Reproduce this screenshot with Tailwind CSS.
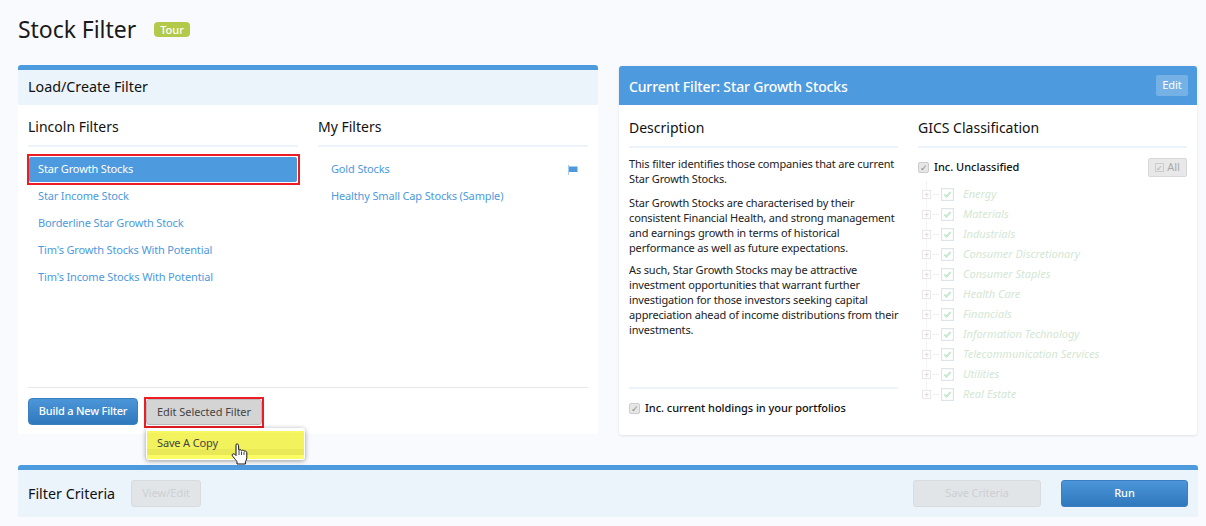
<!DOCTYPE html>
<html><head><meta charset="utf-8">
<script src="https://cdn.jsdelivr.net/npm/@tailwindcss/browser@4"></script>
</head>
<body class="bg-[#f9fafd] font-['Noto_Sans',sans-serif] text-[#111]">
<div class="w-[1206px] h-[526px] overflow-hidden px-[18px]">
  <div class="h-[65px] flex items-center pb-[6px] gap-[18px]">
    <h1 class="text-[23px] leading-none text-[#1a1a1a] tracking-[-0.05px]">Stock Filter</h1>
    <span class="bg-[#b2c94a] text-white text-[11px] font-medium leading-[15px] rounded-[4px] px-[6px] mb-[1px]">Tour</span>
  </div>
  <div class="flex gap-[21px] items-start">
    <section class="w-[580px] h-[369px] bg-white border-t-[5px] border-[#4d9ade] rounded-t-[3px] flex flex-col relative">
      <div class="h-[35px] bg-[#ebf3fb] flex items-center px-[10px] pb-[2px] text-[14.3px]">Load/Create Filter</div>
      <div class="flex-1 flex gap-[20px] px-[10px]">
        <div class="w-[270px]">
          <h2 class="h-[42px] border-b-2 border-[#edf3fa] text-[14px] pt-[11px] leading-[22px]">Lincoln Filters</h2>
          <ul class="mt-[10px] flex flex-col gap-[2px] text-[11px] tracking-[-0.15px] text-[#4d9ade]">
            <li class="relative h-[25px] flex items-center px-[9px] mx-px bg-[#4d9ade] text-white rounded-[2px]">Star Growth Stocks<span class="absolute -left-[2px] -right-[3px] -top-[3px] -bottom-[3px] border-2 border-[#ed1c24]"></span></li>
            <li class="h-[25px] flex items-center px-[10px]">Star Income Stock</li>
            <li class="h-[25px] flex items-center px-[10px]">Borderline Star Growth Stock</li>
            <li class="h-[25px] flex items-center px-[10px]">Tim's Growth Stocks With Potential</li>
            <li class="h-[25px] flex items-center px-[10px]">Tim's Income Stocks With Potential</li>
          </ul>
        </div>
        <div class="w-[270px]">
          <h2 class="h-[42px] border-b-2 border-[#edf3fa] text-[14px] pt-[11px] leading-[22px]">My Filters</h2>
          <ul class="mt-[10px] flex flex-col gap-[2px] text-[11px] tracking-[-0.15px] text-[#4d9ade]">
            <li class="h-[25px] flex items-center justify-between pl-[13px] pr-[10px]">Gold Stocks
              <svg width="10" height="10" viewBox="0 0 10 10"><path d="M0.5 0v10" stroke="#a9c9ee" stroke-width="1"/><path d="M1 1.500h8.500v5.500H1z" fill="#4d9ade"/></svg>
            </li>
            <li class="h-[25px] flex items-center pl-[13px]">Healthy Small Cap Stocks (Sample)</li>
          </ul>
        </div>
      </div>
      <div class="mx-[10px] h-[47px] border-t border-[#e8e8e8] flex gap-[8px] pt-[10px] items-start">
        <button class="h-[27px] w-[110px] rounded-[4px] bg-gradient-to-b from-[#4b96d9] to-[#2f78bb] border border-[#3a80c0] text-white text-[11px] font-medium tracking-[-0.2px]">Build a New Filter</button>
        <div class="relative">
          <button class="h-[26px] w-[116px] mt-px block rounded-[3px] bg-[#d4d4d4] border border-[#bbb] text-[#444] text-[11px] tracking-[-0.05px]">Edit Selected Filter</button>
          <span class="absolute -left-[2px] -right-[2px] -top-[1px] -bottom-[3px] border-2 border-[#ed1c24]"></span>
          <div class="absolute left-[0px] top-[30px] w-[159px] h-[32px] bg-white rounded-[3px] shadow-[0_1px_5px_rgba(0,0,0,0.4)] p-[1px] pt-[3px] pb-[1px] z-10">
            <div class="h-full bg-[linear-gradient(#f7f75f_0,#f7f75f_2px,#f2f25c_2px,#f2f25c_18px,#e9e958_18px,#e9e958_24px,#fbfb63_24px)] text-[11px] tracking-[-0.15px] text-[#444] flex items-center pl-[10px] pb-[3px]">Save A Copy</div>
          </div>
          <svg class="absolute left-[85px] top-[45px] z-20" width="17" height="23" viewBox="0 0 17 23"><path d="M5 1.500c1-1 2.300-.6 2.500.8l.3 5 1.200-.5c.8-.2 1.300.1 1.500.6l1.200-.2c.8 0 1.200.3 1.400.9l1-.1c1 .1 1.700.7 1.700 1.800v5c0 1.500-.6 2.800-1.400 3.800V21H6v-2.300c-.8-1.300-2.300-3-4-5-1.300-1.300-.9-2.600.2-2.800.9-.1 1.800.5 2.800 1.600z" fill="#fff" stroke="#111" stroke-width="1" stroke-linejoin="round"/><path d="M8 8v4M10.500 8.500V12M13 9v3" stroke="#111" stroke-width=".8" fill="none"/></svg>
        </div>
      </div>
    </section>
    <section class="w-[578px] h-[369px] mt-px bg-white rounded-[3px] shadow-[0_1px_3px_rgba(0,0,0,0.1)] flex flex-col">
      <div class="h-[39px] bg-[#4d9ade] rounded-t-[3px] flex items-center justify-between pl-[10px] pr-[9px]">
        <span class="text-white text-[14px] font-medium tracking-[-0.15px] pt-[2px]">Current Filter: Star Growth Stocks</span>
        <span class="h-[21px] w-[32px] rounded-[2px] bg-[#76b1e6] text-white text-[11px] flex items-center justify-center">Edit</span>
      </div>
      <div class="flex-1 flex gap-[20px] px-[10px]">
        <div class="w-[269px] flex flex-col">
          <h2 class="h-[43px] border-b-2 border-[#edf3fa] text-[14px] pt-[12px] leading-[22px] shrink-0">Description</h2>
          <div class="flex-1 text-[11px] tracking-[-0.15px] leading-[15px] text-[#222] pt-[8px]">
            <p class="mb-[9px]">This filter identifies those companies that are current Star Growth Stocks.</p>
            <p class="mb-[7px]">Star Growth Stocks are characterised by their consistent Financial Health, and strong management and earnings growth in terms of historical performance as well as future expectations.</p>
            <p class="-mr-[4px]">As such, Star Growth Stocks may be attractive investment opportunities that warrant further investigation for those investors seeking capital appreciation ahead of income distributions from their investments.</p>
          </div>
          <div class="h-[48px] border-t-2 border-[#edf3fa] flex items-center gap-[5px] text-[11px] font-medium tracking-[-0.05px] pb-[8px]">
            <span class="w-[11px] h-[11px] bg-[#e6e6e6] border border-[#ccc] rounded-[2px] text-[#888] text-[9px] leading-[9px] text-center">✓</span>
            Inc. current holdings in your portfolios
          </div>
        </div>
        <div class="w-[269px]">
          <h2 class="h-[43px] border-b-2 border-[#edf3fa] text-[14px] pt-[12px] leading-[22px]">GICS Classification</h2>
          <div class="h-[20px] mt-[9px] flex items-center justify-between">
            <div class="flex items-center gap-[5px] text-[11px] font-medium">
              <span class="w-[11px] h-[11px] bg-[#e6e6e6] border border-[#ccc] rounded-[2px] text-[#888] text-[9px] leading-[9px] text-center">✓</span>
              Inc. Unclassified
            </div>
            <span class="w-[39px] h-[19px] bg-[#e8e8e8] border border-[#d8d8d8] rounded-[2px] text-[#aaa] text-[11px] flex items-center justify-center gap-[3px]"><span class="w-[9px] h-[9px] border border-[#ccc] text-[8px] leading-[8px] text-center">✓</span>All</span>
          </div>
          <ul class="relative mt-[7px] flex flex-col text-[11px] italic text-[#d3e7d3] pl-[4px]">
            <span class="absolute left-[8px] -top-[2px] bottom-[10px] border-l border-dotted border-[#ececec]"></span>
            <li class="relative h-[20px] flex items-center"><span class="w-[9px] h-[9px] bg-white border border-[#e8e8e8] text-[#ccc] text-[8px] leading-[7px] text-center">+</span><span class="w-[6px] mx-[2px] border-t border-dotted border-[#e8e8e8]"></span><svg class="mr-[9px]" width="13" height="13" viewBox="0 0 13 13"><rect x=".6" y=".6" width="11.800" height="11.800" fill="#fff" stroke="#dde5ea" stroke-width="1.200"/><path d="M3.500 6.500l2 2.200 4-4.700" fill="none" stroke="#c4ebd0" stroke-width="2"/></svg>Energy</li>
            <li class="relative h-[20px] flex items-center"><span class="w-[9px] h-[9px] bg-white border border-[#e8e8e8] text-[#ccc] text-[8px] leading-[7px] text-center">+</span><span class="w-[6px] mx-[2px] border-t border-dotted border-[#e8e8e8]"></span><svg class="mr-[9px]" width="13" height="13" viewBox="0 0 13 13"><rect x=".6" y=".6" width="11.800" height="11.800" fill="#fff" stroke="#dde5ea" stroke-width="1.200"/><path d="M3.500 6.500l2 2.200 4-4.700" fill="none" stroke="#c4ebd0" stroke-width="2"/></svg>Materials</li>
            <li class="relative h-[20px] flex items-center"><span class="w-[9px] h-[9px] bg-white border border-[#e8e8e8] text-[#ccc] text-[8px] leading-[7px] text-center">+</span><span class="w-[6px] mx-[2px] border-t border-dotted border-[#e8e8e8]"></span><svg class="mr-[9px]" width="13" height="13" viewBox="0 0 13 13"><rect x=".6" y=".6" width="11.800" height="11.800" fill="#fff" stroke="#dde5ea" stroke-width="1.200"/><path d="M3.500 6.500l2 2.200 4-4.700" fill="none" stroke="#c4ebd0" stroke-width="2"/></svg>Industrials</li>
            <li class="relative h-[20px] flex items-center"><span class="w-[9px] h-[9px] bg-white border border-[#e8e8e8] text-[#ccc] text-[8px] leading-[7px] text-center">+</span><span class="w-[6px] mx-[2px] border-t border-dotted border-[#e8e8e8]"></span><svg class="mr-[9px]" width="13" height="13" viewBox="0 0 13 13"><rect x=".6" y=".6" width="11.800" height="11.800" fill="#fff" stroke="#dde5ea" stroke-width="1.200"/><path d="M3.500 6.500l2 2.200 4-4.700" fill="none" stroke="#c4ebd0" stroke-width="2"/></svg>Consumer Discretionary</li>
            <li class="relative h-[20px] flex items-center"><span class="w-[9px] h-[9px] bg-white border border-[#e8e8e8] text-[#ccc] text-[8px] leading-[7px] text-center">+</span><span class="w-[6px] mx-[2px] border-t border-dotted border-[#e8e8e8]"></span><svg class="mr-[9px]" width="13" height="13" viewBox="0 0 13 13"><rect x=".6" y=".6" width="11.800" height="11.800" fill="#fff" stroke="#dde5ea" stroke-width="1.200"/><path d="M3.500 6.500l2 2.200 4-4.700" fill="none" stroke="#c4ebd0" stroke-width="2"/></svg>Consumer Staples</li>
            <li class="relative h-[20px] flex items-center"><span class="w-[9px] h-[9px] bg-white border border-[#e8e8e8] text-[#ccc] text-[8px] leading-[7px] text-center">+</span><span class="w-[6px] mx-[2px] border-t border-dotted border-[#e8e8e8]"></span><svg class="mr-[9px]" width="13" height="13" viewBox="0 0 13 13"><rect x=".6" y=".6" width="11.800" height="11.800" fill="#fff" stroke="#dde5ea" stroke-width="1.200"/><path d="M3.500 6.500l2 2.200 4-4.700" fill="none" stroke="#c4ebd0" stroke-width="2"/></svg>Health Care</li>
            <li class="relative h-[20px] flex items-center"><span class="w-[9px] h-[9px] bg-white border border-[#e8e8e8] text-[#ccc] text-[8px] leading-[7px] text-center">+</span><span class="w-[6px] mx-[2px] border-t border-dotted border-[#e8e8e8]"></span><svg class="mr-[9px]" width="13" height="13" viewBox="0 0 13 13"><rect x=".6" y=".6" width="11.800" height="11.800" fill="#fff" stroke="#dde5ea" stroke-width="1.200"/><path d="M3.500 6.500l2 2.200 4-4.700" fill="none" stroke="#c4ebd0" stroke-width="2"/></svg>Financials</li>
            <li class="relative h-[20px] flex items-center"><span class="w-[9px] h-[9px] bg-white border border-[#e8e8e8] text-[#ccc] text-[8px] leading-[7px] text-center">+</span><span class="w-[6px] mx-[2px] border-t border-dotted border-[#e8e8e8]"></span><svg class="mr-[9px]" width="13" height="13" viewBox="0 0 13 13"><rect x=".6" y=".6" width="11.800" height="11.800" fill="#fff" stroke="#dde5ea" stroke-width="1.200"/><path d="M3.500 6.500l2 2.200 4-4.700" fill="none" stroke="#c4ebd0" stroke-width="2"/></svg>Information Technology</li>
            <li class="relative h-[20px] flex items-center"><span class="w-[9px] h-[9px] bg-white border border-[#e8e8e8] text-[#ccc] text-[8px] leading-[7px] text-center">+</span><span class="w-[6px] mx-[2px] border-t border-dotted border-[#e8e8e8]"></span><svg class="mr-[9px]" width="13" height="13" viewBox="0 0 13 13"><rect x=".6" y=".6" width="11.800" height="11.800" fill="#fff" stroke="#dde5ea" stroke-width="1.200"/><path d="M3.500 6.500l2 2.200 4-4.700" fill="none" stroke="#c4ebd0" stroke-width="2"/></svg>Telecommunication Services</li>
            <li class="relative h-[20px] flex items-center"><span class="w-[9px] h-[9px] bg-white border border-[#e8e8e8] text-[#ccc] text-[8px] leading-[7px] text-center">+</span><span class="w-[6px] mx-[2px] border-t border-dotted border-[#e8e8e8]"></span><svg class="mr-[9px]" width="13" height="13" viewBox="0 0 13 13"><rect x=".6" y=".6" width="11.800" height="11.800" fill="#fff" stroke="#dde5ea" stroke-width="1.200"/><path d="M3.500 6.500l2 2.200 4-4.700" fill="none" stroke="#c4ebd0" stroke-width="2"/></svg>Utilities</li>
            <li class="relative h-[20px] flex items-center"><span class="w-[9px] h-[9px] bg-white border border-[#e8e8e8] text-[#ccc] text-[8px] leading-[7px] text-center">+</span><span class="w-[6px] mx-[2px] border-t border-dotted border-[#e8e8e8]"></span><svg class="mr-[9px]" width="13" height="13" viewBox="0 0 13 13"><rect x=".6" y=".6" width="11.800" height="11.800" fill="#fff" stroke="#dde5ea" stroke-width="1.200"/><path d="M3.500 6.500l2 2.200 4-4.700" fill="none" stroke="#c4ebd0" stroke-width="2"/></svg>Real Estate</li>
          </ul>
        </div>
      </div>
    </section>
  </div>
  <section class="w-[1180px] h-[52px] mt-[30px] bg-[#ebf3fb] border-t-[5px] border-[#4d9ade] rounded-t-[3px] flex items-center pl-[10px] pr-[10px]">
    <span class="text-[14.3px]">Filter Criteria</span>
    <span class="ml-[16px] w-[70px] h-[27px] bg-[#e1e5e8] border border-[#d8dcdf] rounded-[3px] text-[#ccd0d3] text-[11px] flex items-center justify-center">View/Edit</span>
    <span class="ml-auto w-[128px] h-[27px] bg-[#e1e5e8] border border-[#d8dcdf] rounded-[3px] text-[#ccd0d3] text-[11px] tracking-[-0.1px] flex items-center justify-center">Save Criteria</span>
    <button class="ml-[20px] w-[127px] h-[27px] rounded-[3px] bg-gradient-to-b from-[#4b96d9] to-[#2f78bb] border border-[#3a80c0] text-white text-[11px] font-medium">Run</button>
  </section>
</div>
</body></html>
